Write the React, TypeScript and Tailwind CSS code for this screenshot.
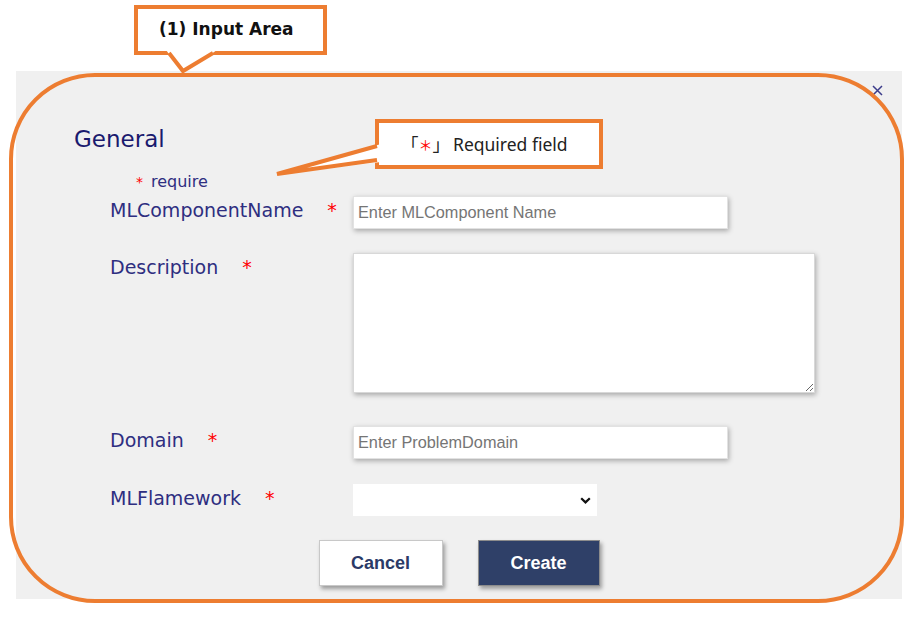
const labelCls =
  "w-[243px] pt-[2px] font-['DejaVu_Sans',sans-serif] text-[19px] leading-[24px] text-[#2e2e80] whitespace-nowrap";
const starCls = "ml-[24px] text-[19px] text-[#ff0000]";
const inputCls =
  "h-[33px] w-[375px] bg-white border border-[#e2e2e2] pl-[4px] font-['Liberation_Sans',Arial,sans-serif] text-[16.3px] text-[#333] placeholder:text-[#757575] shadow-[1px_2px_5px_rgba(0,0,0,0.3)] outline-none";

function CloseIcon() {
  return (
    <svg width="11" height="11" viewBox="0 0 11 11">
      <path d="M1 1 L10 10 M10 1 L1 10" stroke="#3c3c8a" strokeWidth="1.5" fill="none" />
    </svg>
  );
}

function Chevron() {
  return (
    <svg width="11" height="7" viewBox="0 0 11 7">
      <path d="M1.2 1.2 L5.5 5.4 L9.8 1.2" stroke="#111" strokeWidth="2.2" fill="none" />
    </svg>
  );
}

export default function App() {
  return (
    <div className="relative w-[913px] h-[620px] overflow-hidden bg-white pt-[71px] pl-[16px]">
      {/* dialog panel */}
      <div className="flex h-[528px] w-[886px] flex-col bg-[#f0f0f0]">
        <div className="flex justify-end pt-[14px] pr-[19px]">
          <CloseIcon />
        </div>

        <h2 className="ml-[58px] mt-[29px] font-['DejaVu_Sans',sans-serif] text-[23px] leading-[28px] text-[#1a1a6e]">
          General
        </h2>

        <div className="ml-[120px] mt-[19px] font-['DejaVu_Sans',sans-serif] text-[16px] leading-[20px] text-[#2e2e80]">
          <span className="text-[14px] text-[#ff0000]">*</span>
          <span className="ml-[8px]">require</span>
        </div>

        <div className="ml-[94px] mt-[4px] flex items-start">
          <div className={labelCls}>
            MLComponentName<span className={starCls}>*</span>
          </div>
          <input className={inputCls} placeholder="Enter MLComponent Name" />
        </div>

        <div className="ml-[94px] mt-[24px] flex items-start">
          <div className={labelCls}>
            Description<span className={starCls}>*</span>
          </div>
          <textarea className="h-[140px] w-[462px] bg-white border border-[#d8d8d8] shadow-[1px_2px_5px_rgba(0,0,0,0.3)] outline-none" />
        </div>

        <div className="ml-[94px] mt-[33px] flex items-start">
          <div className={labelCls}>
            Domain<span className={starCls}>*</span>
          </div>
          <input className={inputCls} placeholder="Enter ProblemDomain" />
        </div>

        <div className="ml-[94px] mt-[25px] flex items-start">
          <div className={labelCls}>
            MLFlamework<span className={starCls}>*</span>
          </div>
          <div className="relative">
            <select className="h-[32px] w-[244px] appearance-none bg-white border-0 outline-none" />
            <div className="pointer-events-none absolute right-[6px] top-[13px]">
              <Chevron />
            </div>
          </div>
        </div>

        <div className="mt-[24px] flex justify-center gap-[35px] font-['Liberation_Sans',Arial,sans-serif] text-[18px] font-bold">
          <button className="h-[46px] w-[124px] bg-white border border-[#c8c8c8] text-[#2b3a67] shadow-[2px_3px_4px_rgba(0,0,0,0.35)]">
            Cancel
          </button>
          <button className="h-[46px] w-[122px] bg-[#2f4068] border border-[#8c8c8c] text-white shadow-[2px_3px_4px_rgba(0,0,0,0.35)]">
            Create
          </button>
        </div>
      </div>

      {/* annotation: orange frame */}
      <div className="pointer-events-none absolute left-[9px] top-[73px] h-[530px] w-[895px] rounded-[86px] border-4 border-[#ed7d31]" />

      {/* annotation: (1) Input Area */}
      <div className="absolute left-[134px] top-[5px] flex h-[50px] w-[193px] items-center border-4 border-[#ed7d31] bg-white pl-[21px] font-['DejaVu_Sans',sans-serif] text-[17px] font-bold text-[#111]">
        (1) Input Area
      </div>
      <svg className="absolute left-[160px] top-[48px]" width="64" height="30" viewBox="0 0 64 30">
        <polygon points="6,2 57,2 23,25" fill="#fff" />
        <polyline points="9,5 23,23 53,5" fill="none" stroke="#ed7d31" strokeWidth="4" />
      </svg>

      {/* annotation: required field */}
      <div className="absolute left-[375px] top-[119px] flex h-[50px] w-[228px] items-center border-4 border-[#ed7d31] bg-white pl-[22px] font-['Noto_Sans','Noto_Sans_CJK_JP',sans-serif] text-[17.5px] text-[#222]">
        「<span className="text-[14px] text-[#ff0000]">＊</span>」<span className="ml-[3px]">Required field</span>
      </div>
      <svg className="absolute left-[270px] top-[140px]" width="112" height="40" viewBox="0 0 112 40">
        <polygon points="111,4 111,22 6,35" fill="#fff" />
        <polyline points="107,6 7,34 107,20" fill="none" stroke="#ed7d31" strokeWidth="4" />
      </svg>
    </div>
  );
}
